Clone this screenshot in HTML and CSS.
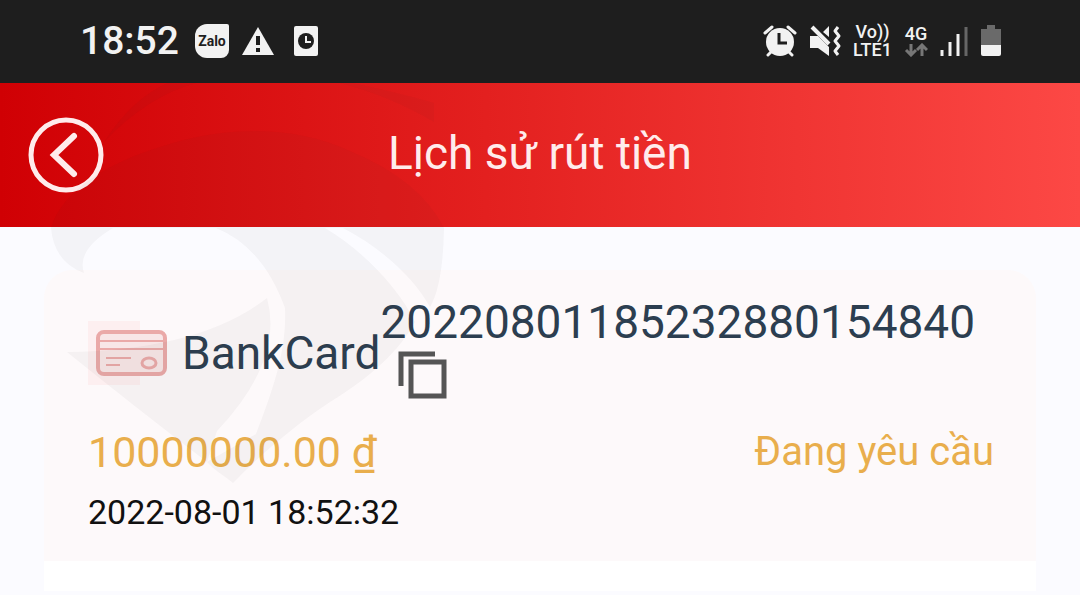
FILE: index.html
```html
<!DOCTYPE html>
<html lang="vi">
  <head>
    <meta charset="UTF-8" />
    <meta name="viewport" content="width=device-width, initial-scale=1.0" />
    <title>Lịch sử rút tiền</title>
    <link rel="stylesheet" href="styles.css">
  </head>
  <body>
    <div class="status-bar">
      <div class="status-left">
        <span class="clock">18:52</span>
        <span class="zalo">Zalo</span>
        <svg viewBox="0 0 34 30" width="34" height="30">
          <path d="M17 1 33 29H1z" fill="#f2f2f2" />
          <path d="M15 10h4v9h-4zM15 22h4v4h-4z" fill="#1e1e1e" />
        </svg>
        <svg class="icon-app" viewBox="0 0 26 32" width="26" height="32">
          <rect x="1" y="1" width="24" height="30" rx="2" fill="#f2f2f2" />
          <circle cx="13" cy="16" r="8" fill="#1e1e1e" />
          <path d="M13 11v6h5" fill="none" stroke="#f2f2f2" stroke-width="2" />
        </svg>
      </div>
      <div class="status-right">
        <svg viewBox="0 0 34 32" width="34" height="32">
          <path d="M2 8 9 2M25 2l7 6M9 26l-4 4M25 26l4 4" stroke="#f2f2f2" stroke-width="3" stroke-linecap="round" />
          <circle cx="17" cy="17" r="14" fill="#f2f2f2" />
          <path d="M16 8v10h8" fill="none" stroke="#1e1e1e" stroke-width="3" />
        </svg>
        <svg viewBox="0 0 32 32" width="32" height="32">
          <path d="M1 11h8l11 11v9L9 23H1zM14 7l6-6v11z" fill="#f2f2f2" />
          <path d="M3 2 20 19" stroke="#f2f2f2" stroke-width="4" />
          <path d="M29 2l-3 4 4 5-4 5 4 5-4 5 3 4" fill="none" stroke="#f2f2f2" stroke-width="3" stroke-linejoin="round" />
        </svg>
        <span class="volte">Vo))<br />LTE1</span>
        <span class="network">
          <span>4G</span>
          <svg viewBox="0 0 24 14" width="24" height="14">
            <path d="M7 1v11M2 7l5 5 5-5M18 13V2M13 7l5-5 5 5" fill="none" stroke="#777" stroke-width="3" />
          </svg>
        </span>
        <svg viewBox="0 0 28 32" width="28" height="32">
          <path d="M2 25v6M10 17v14M18 9v22" stroke="#f2f2f2" stroke-width="3" />
          <path d="M26 2v29" stroke="#666" stroke-width="3" />
        </svg>
        <svg viewBox="0 0 22 32" width="22" height="32">
          <path d="M7 0h8v4h6v17H1V4h6z" fill="#6a6a6a" />
          <path d="M1 20h20v9q0 2-2 2H3q-2 0-2-2z" fill="#f2f2f2" />
        </svg>
      </div>
    </div>

    <header class="header">
      <button class="back" type="button" aria-label="Quay lại">
        <svg viewBox="0 0 76 76" width="76" height="76" fill="none" stroke="#ffecec">
          <circle cx="38" cy="38" r="35" stroke-width="5" />
          <path d="M46 19 26 38l20 19" stroke-width="6" stroke-linecap="round" />
        </svg>
      </button>
      <h1>Lịch sử rút tiền</h1>
    </header>

    <main class="content">
      <article class="card">
        <div class="card-top">
          <svg viewBox="0 0 84 64" width="84" height="64">
            <rect width="52" height="64" fill="#fdeff0" />
            <g fill="none" stroke="#eaa9a8">
              <rect x="10" y="11" width="67" height="42" rx="6" fill="#f8e6e7" stroke-width="4" />
              <path d="M10 20h67M10 28h67M18 37h25M18 44h14" stroke-width="2" />
              <ellipse cx="61" cy="42" rx="7" ry="5" stroke-width="3" />
            </g>
          </svg>
          <span class="method">BankCard</span>
          <div class="order">
            <span>20220801185232880154840</span>
            <button class="copy" type="button" aria-label="Sao chép">
              <svg viewBox="0 0 50 48" width="50" height="48" fill="none" stroke="#555">
                <path d="M3 35V3h34" stroke-width="5" />
                <path d="M13 11h33v34H13z" stroke-width="5" />
              </svg>
            </button>
          </div>
        </div>
        <div class="card-row">
          <span class="amount">10000000.00 ₫</span>
          <span class="state">Đang yêu cầu</span>
        </div>
        <time class="date" datetime="2022-08-01T18:52:32">2022-08-01 18:52:32</time>
      </article>
      <div class="card-footer"></div>
    </main>

    <!-- Logo watermark over the page -->
    <svg class="watermark" viewBox="0 83 460 402" width="460" height="402" aria-hidden="true">
      <path d="M104 142Q132 98 168 83H352Q404 94 434 103V122Q390 96 340 83H196Q148 96 104 142z" />
      <path d="M51 228C62 190 110 162 160 147C225 125 295 125 350 151Q420 180 444 228Q443 285 430 307C415 280 385 250 343 228H325C365 252 400 290 415 322C400 350 370 378 330 402C295 425 260 455 233 483C222 474 214 470 207 462L256 434C273 390 287 350 285 308Q263 247 216 228H113Q76 250 84 273Q54 262 51 228z" />
      <path d="M67 352Q200 350 267 298Q284 360 217 431L207 462Q135 407 67 352z" />
    </svg>
  </body>
</html>
```
FILE: styles.css
```css
*,
*::before,
*::after {
  box-sizing: border-box;
}

body {
  position: relative;
  margin: 0;
  background: #fbfbff;
  color: #2c3e50;
  font-family: Roboto, sans-serif;
}

svg {
  display: block;
  flex: none;
}

button {
  padding: 0;
  border: 0;
  background: none;
  cursor: pointer;
}

.status-bar {
  display: flex;
  align-items: center;
  justify-content: space-between;
  height: 83px;
  padding: 0 78px 2px 80px;
  background: #1e1e1e;
  color: #f2f2f2;
}

.status-left,
.status-right {
  display: flex;
  align-items: center;
  gap: 12px;
}

.clock {
  margin-right: 4px;
  font-size: 39px;
  font-weight: 500;
}

.zalo {
  width: 34px;
  height: 34px;
  border-radius: 12px 2px 8px 12px;
  background: #f2f2f2;
  color: #1e1e1e;
  font-size: 14px;
  font-weight: 700;
  line-height: 34px;
  text-align: center;
}

.icon-app {
  margin-left: 6px;
}

.volte,
.network {
  font-size: 18px;
  font-weight: 500;
  line-height: 18px;
  text-align: center;
}

.network {
  display: flex;
  flex-direction: column;
  align-items: center;
}

.header {
  display: grid;
  grid-template-columns: 76px 1fr 76px;
  align-items: center;
  height: 144px;
  padding: 0 28px;
  background: linear-gradient(90deg, #d00004, #e3201f 45%, #fc4845);
}

h1 {
  margin: 0;
  padding-bottom: 4px;
  color: #ffecec;
  font-size: 46px;
  font-weight: 400;
  text-align: center;
}

.content {
  padding: 43px 44px 0;
}

.card {
  padding: 25px 42px 28px 44px;
  border-radius: 28px 28px 0 0;
  background: #fdf9fa;
}

.card-top {
  display: flex;
  align-items: center;
  font-size: 46px;
  line-height: 54px;
}

.method {
  margin-left: 10px;
}

.copy {
  display: block;
  margin: 2px 0 12px 18px;
}

.card-row {
  display: flex;
  justify-content: space-between;
  margin-top: 14px;
  color: #e9ae4c;
  line-height: 54px;
}

.amount {
  font-size: 43px;
}

.state {
  font-size: 40px;
}

.date {
  display: block;
  margin-top: 12px;
  color: #111;
  font-size: 34px;
  line-height: 42px;
}

.card-footer {
  height: 30px;
  background: #fff;
}

.watermark {
  position: absolute;
  top: 83px;
  left: 0;
  fill: #333;
  fill-opacity: 0.04;
  pointer-events: none;
}
```
